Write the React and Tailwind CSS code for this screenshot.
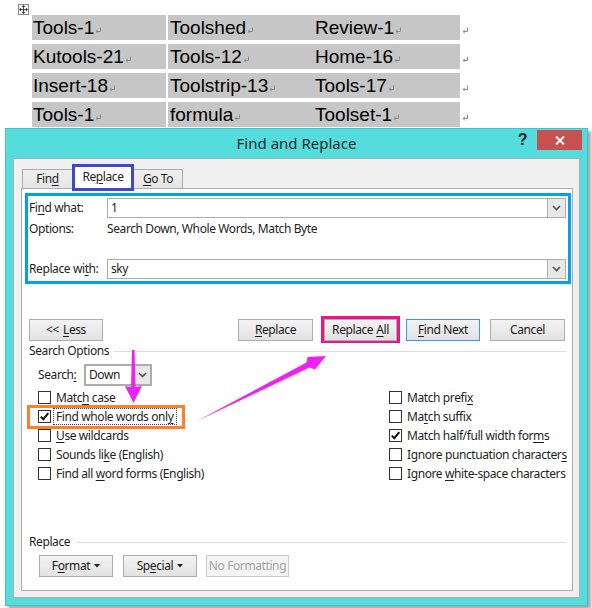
import React from "react";

const Ret = () => (
  <svg width="7" height="7" viewBox="0 0 7 7" className="ml-[1px] self-end mb-[6px] shrink-0">
    <path d="M5.5 0.5 V4.5 H1.2" fill="none" stroke="#8a8a8a" strokeWidth="1" />
    <path d="M2.8 3 L1 4.5 L2.8 6" fill="none" stroke="#8a8a8a" strokeWidth="1" />
  </svg>
);

const U = ({ children }) => (
  <span className="underline decoration-1 underline-offset-[2px]">{children}</span>
);

const Chevron = () => (
  <svg width="9" height="6" viewBox="0 0 9 6">
    <polyline points="1,1 4.5,4.5 8,1" fill="none" stroke="#555" strokeWidth="1.6" />
  </svg>
);

const Tri = () => (
  <svg width="6" height="4" viewBox="0 0 6 4" className="ml-[4px]">
    <polygon points="0,0 6,0 3,3.5" fill="#222" />
  </svg>
);

const btnBase =
  "h-[22px] flex items-center justify-center whitespace-nowrap border bg-linear-to-b from-[#f3f3f3] to-[#e2e2e2] text-[12px] text-[#1a1a1a] shrink-0";

function Check({ checked }) {
  return (
    <div className="w-[13px] h-[13px] border border-[#333] bg-white flex items-center justify-center shrink-0">
      {checked && (
        <svg width="11" height="11" viewBox="0 0 11 11">
          <path d="M1.8 5.6 L4.3 8.2 L9.3 2.2" fill="none" stroke="#111" strokeWidth="2" />
        </svg>
      )}
    </div>
  );
}

function CRow({ checked, children, focus }) {
  return (
    <div className="h-[19px] flex items-center whitespace-nowrap">
      <Check checked={checked} />
      <span
        className={`ml-[2px] px-[2px] leading-[15px] border ${
          focus ? "border-dotted border-[#444]" : "border-transparent"
        }`}
      >
        {children}
      </span>
    </div>
  );
}

const rows = [
  ["Tools-1", "Toolshed", "Review-1"],
  ["Kutools-21", "Tools-12", "Home-16"],
  ["Insert-18", "Toolstrip-13", "Tools-17"],
  ["Tools-1", "formula", "Toolset-1"],
];

export default function App() {
  return (
    <div className="relative w-[592px] h-[608px] bg-white overflow-hidden">
      {/* table move handle */}
      <div className="absolute left-[18px] top-[4px] w-[11px] h-[11px] border border-[#8a8a8a] bg-white flex items-center justify-center">
        <svg width="9" height="9" viewBox="0 0 9 9">
          <path d="M4.5 0.5 V8.5 M0.5 4.5 H8.5" stroke="#444" strokeWidth="1" />
          <path d="M3 2 L4.5 0.5 L6 2 M3 7 L4.5 8.5 L6 7 M2 3 L0.5 4.5 L2 6 M7 3 L8.5 4.5 L7 6" fill="none" stroke="#444" strokeWidth="1" />
        </svg>
      </div>

      {/* Word table */}
      <div className="pt-[15px] pl-[32px] flex flex-col gap-[4px] font-['Liberation_Sans',Arial,sans-serif] text-[19px] text-black leading-none">
        {rows.map((r, i) => (
          <div key={i} className="flex h-[25px]">
            <div className="w-[134px] bg-[#c6c6c6] flex items-center pl-[1px]">
              <span>{r[0]}</span>
              <Ret />
            </div>
            <div className="w-[2px]" />
            <div className="w-[145px] bg-[#c6c6c6] flex items-center pl-[2px]">
              <span>{r[1]}</span>
              <Ret />
            </div>
            <div className="w-[147px] bg-[#c6c6c6] flex items-center pl-[2px]">
              <span>{r[2]}</span>
              <Ret />
            </div>
            <div className="flex pl-[1px]">
              <Ret />
            </div>
          </div>
        ))}
      </div>

      {/* Dialog window */}
      <div className="ml-[5px] mt-[1px] w-[583px] h-[478px] border border-[#48c2c2] bg-[#55dcdc] shadow-[3px_3px_3px_rgba(0,0,0,0.35)] flex flex-col font-['Noto_Sans',sans-serif] text-[12px] tracking-[-0.4px] text-[#1e1e1e]">
        {/* title bar */}
        <div className="h-[29px] grid grid-cols-[1fr_auto_1fr]">
          <div />
          <div className="flex items-center text-[15px] tracking-normal text-[#2a2a2a] pb-[1px]">Find and Replace</div>
          <div className="flex justify-end items-start pr-[5px]">
            <div className="mt-[1px] mr-[10px] h-[20px] flex items-center text-[16px] font-bold text-[#222] font-['Liberation_Sans',sans-serif]">?</div>
            <div className="mt-[1px] w-[45px] h-[20px] bg-[#c75050] flex items-center justify-center">
              <svg width="10" height="9" viewBox="0 0 10 9">
                <path d="M1 0.5 L9 8.5 M9 0.5 L1 8.5" stroke="#fff" strokeWidth="2" />
              </svg>
            </div>
          </div>
        </div>

        {/* client area */}
        <div className="mx-[7px] h-[440px] border border-[#b0b0b0] bg-[#f0f0f0] flex flex-col pt-[5px] px-[7px]">
          {/* tabs */}
          <div className="h-[24px] flex items-end pl-[1px]">
            <div className="w-[51px] h-[19px] border border-b-0 border-[#acacac] bg-linear-to-b from-[#f0f0f0] to-[#e5e5e5] flex items-center justify-center">
              Fin<U>d</U>
            </div>
            <div className="relative z-10 -ml-[1px] mb-[-3px] w-[62px] h-[27px] border-[3px] border-[#3f48cc] bg-white flex items-center justify-center pb-[2px]">
              Re<U>p</U>lace
            </div>
            <div className="w-[49px] h-[19px] border border-b-0 border-l-0 border-[#acacac] bg-linear-to-b from-[#f0f0f0] to-[#e5e5e5] flex items-center justify-center">
              <U>G</U>o To
            </div>
          </div>

          {/* tab panel */}
          <div className="w-[552px] h-[403px] border border-[#acacac] bg-white flex flex-col">
            {/* highlighted find/replace fields */}
            <div className="ml-[3px] mt-[4px] w-[546px] h-[91px] border-[3px] border-[#00a2e8] flex flex-col whitespace-nowrap">
              <div className="mt-[2px] h-[20px] flex items-center">
                <div className="w-[79px] pl-[1px]">Fi<U>n</U>d what:</div>
                <div className="w-[459px] h-[20px] border border-[#acacac] bg-white flex items-center">
                  <span className="flex-1 pl-[3px]">1</span>
                  <div className="w-[18px] h-full border-l border-[#acacac] bg-[#e8e8e8] flex items-center justify-center">
                    <Chevron />
                  </div>
                </div>
              </div>
              <div className="mt-[3px] h-[16px] flex items-center">
                <div className="w-[79px] pl-[1px]">Options:</div>
                <div>Search Down, Whole Words, Match Byte</div>
              </div>
              <div className="mt-[22px] h-[20px] flex items-center">
                <div className="w-[79px] pl-[1px]">Replace wi<U>t</U>h:</div>
                <div className="w-[459px] h-[20px] border border-[#acacac] bg-white flex items-center">
                  <span className="flex-1 pl-[3px]">sky</span>
                  <div className="w-[18px] h-full border-l border-[#acacac] bg-[#e8e8e8] flex items-center justify-center">
                    <Chevron />
                  </div>
                </div>
              </div>
            </div>

            {/* buttons row */}
            <div className="mt-[32px] h-[27px] flex items-center">
              <div className={`${btnBase} ml-[7px] w-[74px] border-[#adadad]`}>
                &lt;&lt; <span className="ml-[4px]"><U>L</U>ess</span>
              </div>
              <div className={`${btnBase} ml-[135px] w-[75px] border-[#adadad]`}>
                <U>R</U>eplace
              </div>
              <div className="ml-[8px] w-[79px] h-[27px] border-[3px] border-[#e8168a] flex items-center">
                <div className={`${btnBase} w-full h-[21px] border-[#adadad]`}>
                  Replace <span className="ml-[3px]"><U>A</U>ll</span>
                </div>
              </div>
              <div className={`${btnBase} ml-[6px] w-[74px] border-[#3399ff]`}>
                <U>F</U>ind Next
              </div>
              <div className={`${btnBase} ml-[10px] w-[75px] border-[#adadad]`}>Cancel</div>
            </div>

            {/* search options heading */}
            <div className="h-[16px] flex items-center pl-[7px] pr-[6px] whitespace-nowrap">
              <span>Search Options</span>
              <div className="ml-[5px] flex-1 h-px bg-[#dcdcdc]" />
            </div>

            {/* search direction */}
            <div className="mt-[5px] h-[22px] flex items-center pl-[16px] whitespace-nowrap">
              <div className="w-[46px]">Search<U>:</U></div>
              <div className="w-[68px] h-[22px] border-2 border-[#adadad] bg-white flex items-center">
                <span className="flex-1 pl-[3px]">Down</span>
                <div className="w-[16px] h-full border-l border-[#adadad] bg-[#e8e8e8] flex items-center justify-center">
                  <Chevron />
                </div>
              </div>
            </div>

            {/* checkboxes */}
            <div className="mt-[2px] grid grid-cols-[351px_1fr] pl-[16px]">
              <div className="flex flex-col">
                <CRow>Matc<U>h</U> case</CRow>
                <div className="relative">
                  <CRow checked focus>Find whole words onl<U>y</U></CRow>
                  <div className="absolute left-[-11px] top-[-2px] w-[158px] h-[24px] border-[3px] border-[#ff7f27]" />
                </div>
                <CRow><U>U</U>se wildcards</CRow>
                <CRow>Sounds li<U>k</U>e (English)</CRow>
                <CRow>Find all <U>w</U>ord forms (English)</CRow>
              </div>
              <div className="flex flex-col">
                <CRow>Match prefi<U>x</U></CRow>
                <CRow>Ma<U>t</U>ch suffix</CRow>
                <CRow checked>Match half/full width for<U>m</U>s</CRow>
                <CRow>Ignore punctuation character<U>s</U></CRow>
                <CRow>Ignore <U>w</U>hite-space characters</CRow>
              </div>
            </div>

            {/* replace section */}
            <div className="mt-auto h-[16px] flex items-center pl-[7px] pr-[6px]">
              <span>Replace</span>
              <div className="ml-[6px] flex-1 h-px bg-[#dcdcdc]" />
            </div>
            <div className="mt-[5px] mb-[13px] h-[22px] flex items-center pl-[17px]">
              <div className={`${btnBase} w-[74px] border-[#adadad]`}>
                F<U>o</U>rmat
                <Tri />
              </div>
              <div className={`${btnBase} ml-[10px] w-[74px] border-[#adadad]`}>
                Sp<U>e</U>cial
                <Tri />
              </div>
              <div className="ml-[9px] w-[83px] h-[22px] border border-[#cccccc] bg-[#f4f4f4] flex items-center justify-center whitespace-nowrap text-[#a3a3a3]">
                No Formatting
              </div>
            </div>
          </div>
        </div>
      </div>

      {/* annotation arrows */}
      <svg className="absolute left-0 top-0 pointer-events-none" width="592" height="608" viewBox="0 0 592 608">
        <polygon
          points="132,350 134.5,350 135.5,387 142,386 133.5,403 125,386 131,387"
          fill="#f020f0"
        />
        <polygon
          points="197,421 306.5,362.5 307.5,357 326,356 315,369.5 309.5,367.5"
          fill="#f020f0"
        />
      </svg>
    </div>
  );
}
